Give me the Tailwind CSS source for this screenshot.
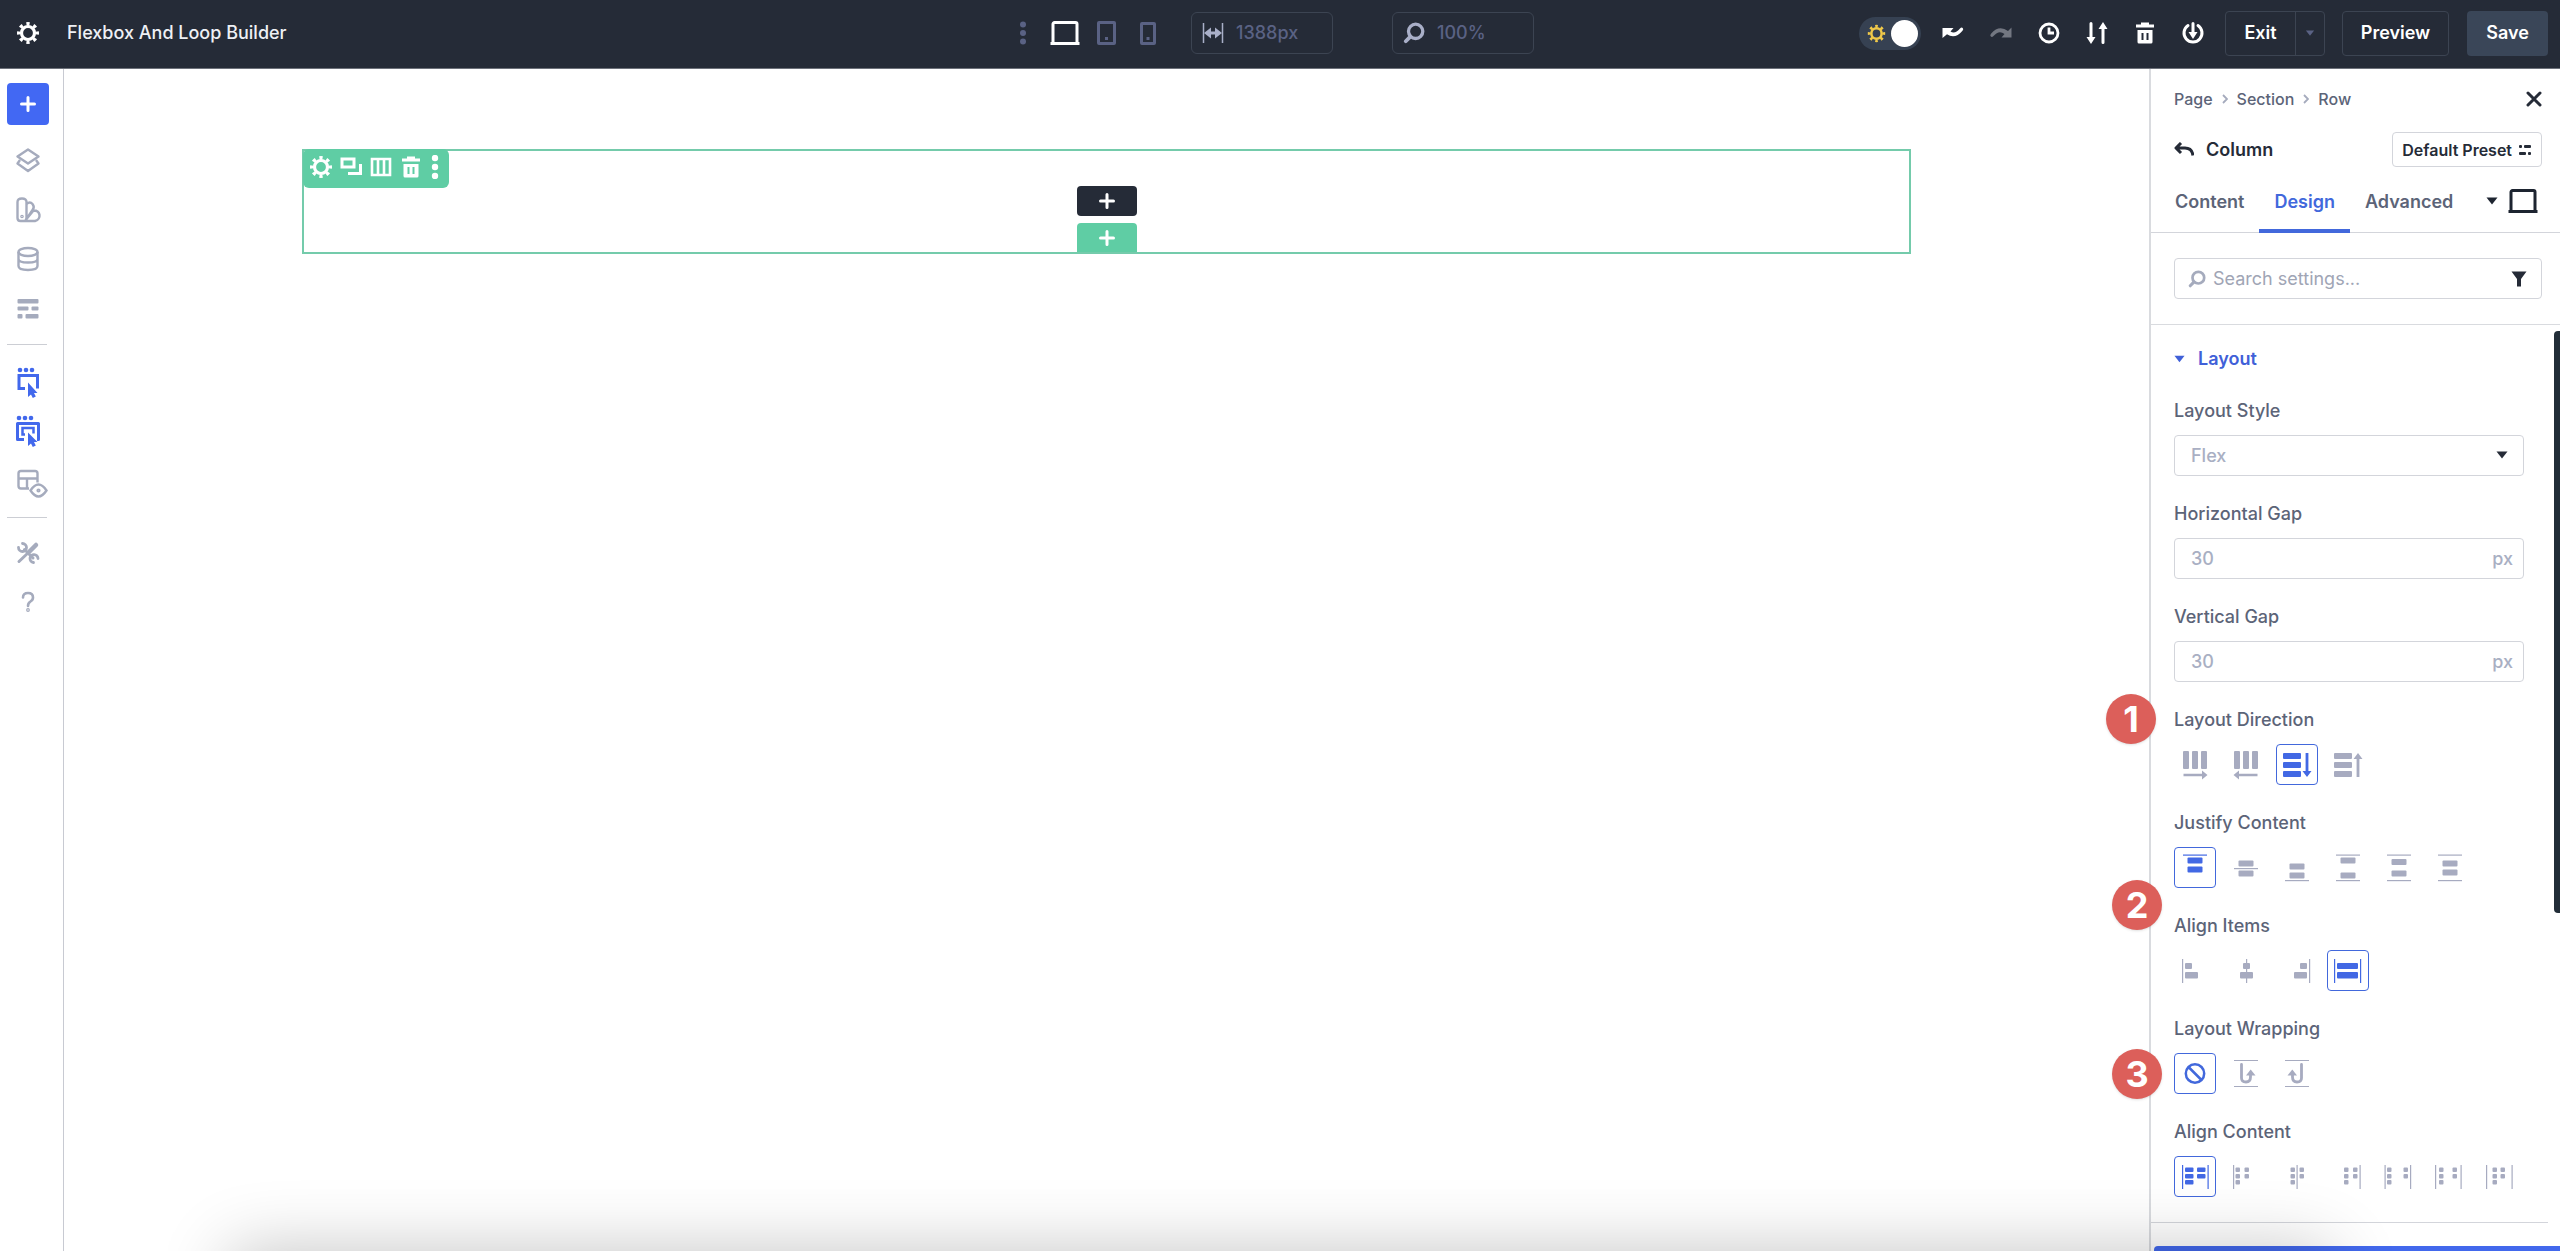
<!DOCTYPE html>
<html lang="en">
<head>
  <meta charset="UTF-8" />
  <meta name="viewport" content="width=device-width, initial-scale=1.0"/>
  <title>Flexbox And Loop Builder</title>
  <script src="https://cdn.jsdelivr.net/npm/@tailwindcss/browser@4"></script>
</head>
<body class="relative flex h-screen flex-col overflow-hidden bg-white font-['Inter',sans-serif] text-lg font-medium text-[#252b37]">

  <!-- Shared icons -->
  <svg class="hidden">
    <symbol id="gear" viewBox="0 0 24 24">
      <circle cx="12" cy="12" r="6.5" fill="none" stroke="currentColor" stroke-width="3.2"/>
      <circle cx="12" cy="12" r="9.2" fill="none" stroke="currentColor" stroke-width="3.6" pathLength="16" stroke-dasharray="0.9 1.1" stroke-dashoffset="0.45"/>
    </symbol>
    <symbol id="trash" viewBox="0 0 24 24">
      <path d="M8 1.500h8v2h5v3H3v-3h5z" fill="currentColor"/>
      <path fill-rule="evenodd" d="M4.500 9h15v12a1.500 1.500 0 0 1-1.500 1.500H6a1.500 1.500 0 0 1-1.500-1.500zM8.500 12v7h2v-7zM13.500 12v7h2v-7z" fill="currentColor"/>
    </symbol>
    <symbol id="laptop" viewBox="0 0 30 26">
      <path d="M3 22V4a1.500 1.500 0 0 1 1.500-1.500h21A1.500 1.500 0 0 1 27 4v18M0.500 23.500h29" fill="none" stroke="currentColor" stroke-width="3"/>
    </symbol>
    <symbol id="plus" viewBox="0 0 16 16">
      <path d="M8 1.500v13M1.500 8h13" stroke="currentColor" stroke-width="3" stroke-linecap="round"/>
    </symbol>
    <symbol id="search" viewBox="0 0 20 20">
      <circle cx="11.500" cy="8.500" r="6.500" fill="none" stroke="currentColor" stroke-width="3"/>
      <path d="M6.500 13.500L2.500 17.500" stroke="currentColor" stroke-width="3.500" stroke-linecap="round"/>
    </symbol>
    <symbol id="caret" viewBox="0 0 12 8">
      <path d="M0.500 0.500h11L6 7.500z" fill="currentColor"/>
    </symbol>
  </svg>

  <!-- Top Bar -->
  <header class="grid h-[69px] shrink-0 grid-cols-[1fr_auto_1fr] items-center border-b border-b-[#6d717a] bg-[#252b37] pr-3 pb-[2px] pl-4 text-white">
    <div class="flex items-center gap-[27px]">
      <button aria-label="Settings"><svg class="size-6"><use href="#gear"/></svg></button>
      <h1 class="text-[#eef0f5]">Flexbox And Loop Builder</h1>
    </div>

    <div class="flex items-center pr-[10px] text-[#5a6284]">
      <button aria-label="More views">
        <svg class="h-6 w-[6px]" viewBox="0 0 6 24" fill="currentColor"><circle cx="3" cy="3.500" r="3"/><circle cx="3" cy="12" r="3"/><circle cx="3" cy="20.500" r="3"/></svg>
      </button>
      <button class="ml-6 text-white" aria-label="Desktop view"><svg class="h-[26px] w-[30px]"><use href="#laptop"/></svg></button>
      <button class="ml-[17px]" aria-label="Tablet view">
        <svg class="h-6 w-[19px]" viewBox="0 0 19 24" fill="none" stroke="currentColor" stroke-width="3"><rect x="1.500" y="1.500" width="16" height="21" rx="0.500"/><path d="M8 17.500h3"/></svg>
      </button>
      <button class="ml-6" aria-label="Phone view">
        <svg class="h-6 w-4" viewBox="0 0 16 24" fill="none" stroke="currentColor" stroke-width="3"><rect x="1.500" y="2.500" width="13" height="20" rx="0.500"/><path d="M6.500 17.500h3"/></svg>
      </button>
      <label class="ml-[35px] flex h-[42px] w-[142px] items-center gap-3 rounded-md border border-[#3c4452] pl-[10px]">
        <svg class="h-5 w-[22px] shrink-0 text-[#a9afc8]" viewBox="0 0 22 20" stroke="currentColor" stroke-width="1.500"><path d="M1.500 0v20M20.500 0v20"/><path d="M2 10l7-5.500v4h4v-4L20 10l-7 5.500v-4H9v4z" fill="currentColor" stroke="none"/></svg>
        <input class="w-20 bg-transparent outline-none" type="text" value="1388px" aria-label="Canvas width" />
      </label>
      <label class="ml-[59px] flex h-[42px] w-[142px] items-center gap-3 rounded-md border border-[#3c4452] pl-[10px]">
        <svg class="size-[22px] shrink-0 text-[#a9afc8]"><use href="#search"/></svg>
        <input class="w-20 bg-transparent outline-none" type="text" value="100%" aria-label="Zoom" />
      </label>
    </div>

    <div class="flex items-center justify-end">
      <button class="flex h-[33px] w-[62px] items-center justify-between rounded-full bg-[#364152] pr-[3px] pl-2" role="switch" aria-checked="true" aria-label="Light mode">
        <svg class="size-[19px] text-[#f0c949]"><use href="#gear"/></svg>
        <span class="size-[27px] rounded-full bg-white"></span>
      </button>
      <div class="ml-5 flex items-center gap-6">
        <button aria-label="Undo"><svg class="size-6" viewBox="0 0 24 24"><path d="M1.500 7H12.500L9.500 10.500q4.500 3 9.500-3 1.500-1.500 2.700-0.500t-0.200 2.700q-7.500 9-15.500 3.500L1.500 17z" fill="currentColor"/></svg></button>
        <button class="text-[#737781]" aria-label="Redo"><svg class="size-6" viewBox="0 0 24 24"><path d="M22.500 6.500v10H12.500L15.500 13Q10 8.500 4.500 15q-1.500 1.500-2.700 0.500t0.200-2.700Q10 3.500 19 10z" fill="currentColor"/></svg></button>
        <button aria-label="History"><svg class="size-6" viewBox="0 0 24 24" fill="none" stroke="currentColor" stroke-width="2.800"><circle cx="12" cy="12" r="9"/><path d="M12 6.500V12h5"/></svg></button>
        <button aria-label="Portability"><svg class="size-6" viewBox="0 0 24 24"><path d="M6 2.500V18M18 6v15.500" fill="none" stroke="currentColor" stroke-width="3" stroke-linecap="round"/><path d="M1.500 16h9L6 23zM13.500 8h9L18 1z" fill="currentColor"/></svg></button>
        <button aria-label="Clear layout"><svg class="size-6"><use href="#trash"/></svg></button>
        <button aria-label="Page state"><svg class="size-6" viewBox="0 0 24 24"><path d="M7 4.500a9 9 0 1 0 10 0M12 2.500V13" fill="none" stroke="currentColor" stroke-width="3" stroke-linecap="round"/><path d="M7.500 11h9L12 18z" fill="currentColor"/></svg></button>
      </div>
      <div class="ml-5 flex h-[45px] rounded border border-[#3c4452] font-semibold">
        <button class="w-[69px]">Exit</button>
        <button class="flex w-[29px] items-center justify-center border-l border-[#3c4452] text-[#5a6284]" aria-label="Exit options"><svg class="h-[6px] w-[10px]"><use href="#caret"/></svg></button>
      </div>
      <button class="ml-[17px] h-[45px] w-[107px] rounded border border-[#3c4452] font-semibold">Preview</button>
      <button class="ml-[18px] h-[45px] w-[81px] rounded bg-[#3a4658] font-semibold">Save</button>
    </div>
  </header>

  <div class="flex min-h-0 flex-1">

    <!-- Left Toolbar -->
    <nav class="flex w-16 shrink-0 flex-col items-start border-r border-[#c8cad2] pt-[14px] pl-[7px] text-[#a5abbd]">
      <button class="flex size-[42px] items-center justify-center rounded bg-[#4268f3] text-white" aria-label="Add"><svg class="size-4"><use href="#plus"/></svg></button>
      <div class="mt-[22px] flex flex-col gap-[21px] pl-[7px]">
        <button aria-label="Layers"><svg class="block size-7" viewBox="0 0 28 28" fill="none" stroke="currentColor" stroke-width="2.400" stroke-linejoin="round"><path d="M14 2.500L24.500 9.500 14 16.500 3.500 9.500zM6 13l-2.500 3.500L14 24l10.500-7.500L22 13"/></svg></button>
        <button aria-label="Design presets"><svg class="block size-7" viewBox="0 0 28 28" fill="none" stroke="currentColor" stroke-width="2.400" stroke-linejoin="round"><path d="M3.500 6q0-3.500 4.500-3.500T12.500 6v16q0 3-3 3h-3q-3 0-3-3zM12.500 8q3.500-3 6 0t0 6l-7 10.500M19.500 14.500q5.500 0 6 4.500t-4.500 6H8.500M12.500 23l7-8.500"/><circle cx="8" cy="20.500" r="0.600"/></svg></button>
        <button aria-label="Variables"><svg class="block size-7" viewBox="0 0 28 28" fill="none" stroke="currentColor" stroke-width="2.400"><ellipse cx="14" cy="7" rx="9.500" ry="4"/><path d="M4.500 7v14q0 4 9.500 4t9.500-4V7M4.500 14q0 3.500 9.500 3.500t9.500-3.500"/></svg></button>
        <button aria-label="Wireframe"><svg class="block size-7" viewBox="0 0 28 28" fill="currentColor"><rect x="3.500" y="5" width="21" height="4.500" rx="1"/><rect x="3.500" y="12.500" width="11" height="4" rx="1"/><rect x="17.500" y="12.500" width="7" height="4" rx="1"/><rect x="3.500" y="20" width="5" height="4.500" rx="1"/><rect x="11.500" y="20" width="13" height="4.500" rx="1"/></svg></button>
      </div>
      <hr class="mt-[22px] w-10 border-[#ccced4]" />
      <div class="mt-[20px] flex flex-col gap-4 pl-[7px] text-[#4268ec]">
        <button aria-label="Click mode"><svg class="block h-[34px] w-7" viewBox="0 0 28 34"><g fill="currentColor"><circle cx="6" cy="5" r="2.300"/><circle cx="12" cy="5" r="2.300"/><circle cx="18" cy="5" r="2.300"/><path d="M14 17.500v14.500l3-2.500 1.800 3.500 3-1.500-1.800-3.500h3.500z"/></g><path d="M11 23.500H5v-13h18.500v13" fill="none" stroke="currentColor" stroke-width="3"/></svg></button>
        <button aria-label="Grid mode"><svg class="block h-[34px] w-7" viewBox="0 0 28 34"><g fill="currentColor"><circle cx="5" cy="3" r="2.300"/><circle cx="11" cy="3" r="2.300"/><circle cx="17" cy="3" r="2.300"/><path d="M14 17.500v13.500l3-2.500 1.800 3.500 3-1.500-1.800-3.500h3.500z"/></g><path d="M10 24.500H3.500v-16h21v16H23" fill="none" stroke="currentColor" stroke-width="3" stroke-linejoin="round"/><path d="M11 19.500H8.500v-6.500h11v5.500" fill="none" stroke="currentColor" stroke-width="2.500"/></svg></button>
        <button class="mt-[3px] text-[#a5abbd]" aria-label="Preview layout"><svg class="block h-[34px] w-9" viewBox="0 0 36 34" fill="none" stroke="currentColor" stroke-width="2.400"><path d="M15 20.500H7q-2.500 0-2.500-2.500V5.500Q4.500 3 7 3h14q2.500 0 2.500 2.500v9M4.500 10.500h19M13 10.500v10"/><path d="M16.500 22.500q8-12 16 0-8 12-16 0z" fill="#fff"/><circle cx="24.500" cy="22.500" r="0.900"/></svg></button>
      </div>
      <hr class="mt-[15px] w-10 border-[#ccced4]" />
      <div class="mt-[21px] flex flex-col gap-[21px] pl-[7px]">
        <button aria-label="Tools"><svg class="block size-7" viewBox="0 0 28 28" fill="none" stroke="currentColor" stroke-linecap="round"><path d="M10.500 10.500L19 19M5 22.500L15 13" stroke-width="3"/><path d="M15.500 12.500L22 6" stroke-width="4.500"/><path d="M8.500 4.500a4 4 0 1 1-4 4M24 19.500a4 4 0 1 0-4.500 4" stroke-width="2.800"/></svg></button>
        <button aria-label="Help"><svg class="block size-7" viewBox="0 0 28 28" fill="none" stroke="currentColor" stroke-width="2.600"><path d="M9 9.500Q9 5 14 5t5 4.500q0 2.500-2.500 4T14 18" stroke-linecap="round"/><circle cx="14" cy="22" r="0.600"/></svg></button>
      </div>
    </nav>

    <!-- Canvas -->
    <main class="min-w-0 flex-1 px-[238px] pt-20">
      <section class="flex h-[105px] items-start border-2 border-[#74cbab]">
        <div class="-mt-[2px] -ml-px flex h-[39px] w-[146px] items-center gap-[6px] rounded-md bg-[#5fcda4] pb-[3px] pl-[6px] text-white">
          <button aria-label="Row settings"><svg class="size-6"><use href="#gear"/></svg></button>
          <button aria-label="Duplicate"><svg class="size-6" viewBox="0 0 24 24" fill="none" stroke="currentColor" stroke-width="3"><path d="M3 4h12v8H3zM9 18.500h12.500V9"/></svg></button>
          <button aria-label="Columns"><svg class="size-6" viewBox="0 0 24 24" fill="none" stroke="currentColor" stroke-width="2.600"><path d="M3 4h18v16H3zM9 4v16M15 4v16"/></svg></button>
          <button aria-label="Delete"><svg class="size-6"><use href="#trash"/></svg></button>
          <button aria-label="More options"><svg class="h-6 w-[12px]" viewBox="0 0 12 24" fill="currentColor"><circle cx="6" cy="3" r="3.200"/><circle cx="6" cy="12" r="3.200"/><circle cx="6" cy="21" r="3.200"/></svg></button>
        </div>
        <div class="-ml-[145px] flex flex-1 flex-col items-center gap-[7px] self-end">
          <button class="flex h-[30px] w-[60px] items-center justify-center rounded bg-[#252b37] text-white" aria-label="Add module"><svg class="size-4"><use href="#plus"/></svg></button>
          <button class="flex h-[29px] w-[60px] items-center justify-center rounded-t bg-[#5fcda4] text-white" aria-label="Add row"><svg class="size-4"><use href="#plus"/></svg></button>
        </div>
      </section>
    </main>

    <!-- Settings Panel -->
    <aside class="relative flex w-[411px] shrink-0 flex-col border-l-2 border-[#d9dbdf] text-[#5c6478]">
      <div class="flex flex-col pt-[18px] pr-[18px] pl-[23px]">
        <div class="flex h-6 items-center justify-between">
          <nav class="flex items-center gap-[9px] text-base" aria-label="Breadcrumb">
            <a href="#">Page</a>
            <svg class="h-[10px] w-[6px]" viewBox="0 0 6 10" fill="none" stroke="#a5abbd" stroke-width="1.800"><path d="M1 1l4 4-4 4"/></svg>
            <a href="#">Section</a>
            <svg class="h-[10px] w-[6px]" viewBox="0 0 6 10" fill="none" stroke="#a5abbd" stroke-width="1.800"><path d="M1 1l4 4-4 4"/></svg>
            <a href="#">Row</a>
          </nav>
          <button class="text-[#252b37]" aria-label="Close"><svg class="size-4" viewBox="0 0 16 16" stroke="currentColor" stroke-width="3" stroke-linecap="round"><path d="M2 2l12 12M14 2L2 14"/></svg></button>
        </div>
        <div class="mt-[21px] flex h-[35px] items-center justify-between font-semibold text-[#252b37]">
          <div class="flex items-center gap-3">
            <button aria-label="Back"><svg class="h-4 w-5" viewBox="0 0 20 16" fill="none" stroke="currentColor" stroke-width="3"><path d="M7 1L2 6l5 5M2.500 6H11q7 0 8 7.500" stroke-linejoin="round"/></svg></button>
            <h2>Column</h2>
          </div>
          <button class="flex h-[35px] items-center gap-[6px] rounded border border-[#d3d5db] px-[9px] text-base">
            Default Preset
            <svg class="h-3 w-[14px]" viewBox="0 0 14 12" fill="currentColor"><rect x="1" y="1" width="3" height="3" rx="1"/><rect x="6" y="1" width="7" height="3" rx="1"/><rect x="1" y="8" width="7" height="3" rx="1"/><rect x="10" y="8" width="3" height="3" rx="1"/></svg>
          </button>
        </div>
      </div>

      <div class="mt-[3px] flex h-[63px] items-stretch border-b border-[#d3d5db] pr-[22px] pl-[9px] font-semibold">
        <button class="-mb-px border-y-4 border-transparent px-[15px]">Content</button>
        <button class="-mb-px border-y-4 border-t-transparent border-b-[#4268dc] px-[15px] text-[#4268dc]">Design</button>
        <button class="-mb-px border-y-4 border-transparent px-[15px]">Advanced</button>
        <button class="ml-auto flex items-center gap-[10px] text-[#1d2430]" aria-label="Responsive view">
          <svg class="h-[8px] w-[12px]"><use href="#caret"/></svg>
          <svg class="h-[26px] w-[30px]"><use href="#laptop"/></svg>
        </button>
      </div>

      <div class="border-b border-[#d9dbdf] py-[25px] pr-[18px] pl-[23px]">
        <label class="flex h-[41px] items-center gap-[7px] rounded border border-[#d3d5db] pr-[14px] pl-[13px]">
          <svg class="size-[18px] shrink-0 text-[#a5abbd]"><use href="#search"/></svg>
          <input class="min-w-0 flex-1 bg-transparent font-normal outline-none placeholder:text-[#a0a5b5]" type="text" placeholder="Search settings..." aria-label="Search settings" />
          <svg class="h-4 w-4" viewBox="0 0 16 16"><path d="M0.500 0.500h15L10 8v7.500H6V8z" fill="#252b37"/></svg>
        </label>
      </div>

      <div class="mr-[12px] flex flex-col gap-[26px] border-b border-[#d3d5db] pt-[22px] pr-[24px] pb-[25px] pl-[23px]">
        <button class="mb-[2px] flex h-6 items-center gap-[13px] font-semibold text-[#4060d8]" aria-expanded="true">
          <svg class="h-[8px] w-[11px]"><use href="#caret"/></svg>
          Layout
        </button>

        <div>
          <label class="mb-3 block h-6 leading-6" for="layoutStyle">Layout Style</label>
          <div class="relative">
            <select id="layoutStyle" class="block h-[41px] w-full appearance-none rounded border border-[#d3d5db] bg-white px-4 text-[#a9afc3] outline-none">
              <option>Flex</option>
              <option>Grid</option>
              <option>Block</option>
            </select>
            <svg class="pointer-events-none absolute top-4 right-4 h-[8px] w-[12px] text-[#252b37]"><use href="#caret"/></svg>
          </div>
        </div>

        <div>
          <label class="mb-3 block h-6 leading-6" for="horizontalGap">Horizontal Gap</label>
          <div class="flex h-[41px] items-center rounded border border-[#d3d5db] pr-[10px] pl-4 text-[#a9afc3]">
            <input id="horizontalGap" class="min-w-0 flex-1 outline-none" type="text" value="30" />
            <span>px</span>
          </div>
        </div>

        <div>
          <label class="mb-3 block h-6 leading-6" for="verticalGap">Vertical Gap</label>
          <div class="flex h-[41px] items-center rounded border border-[#d3d5db] pr-[10px] pl-4 text-[#a9afc3]">
            <input id="verticalGap" class="min-w-0 flex-1 outline-none" type="text" value="30" />
            <span>px</span>
          </div>
        </div>

        <div role="group" aria-labelledby="directionLabel">
          <p id="directionLabel" class="mb-3 h-6 leading-6">Layout Direction</p>
          <div class="flex gap-[9px] text-[#a7abc0]">
            <button class="h-[41px] w-[42px] rounded border border-transparent" aria-label="Row"><svg class="h-[39px] w-10" viewBox="1 1 40 39" fill="currentColor"><rect x="9" y="7" width="6" height="18" rx="1"/><rect x="18" y="7" width="6" height="18" rx="1"/><rect x="27" y="7" width="6" height="18" rx="1"/><path d="M9.500 29.800H28V26.500L33.500 31 28 35.500V32.200H9.500z"/></svg></button>
            <button class="h-[41px] w-[42px] rounded border border-transparent" aria-label="Row reverse"><svg class="h-[39px] w-10" viewBox="1 1 40 39" fill="currentColor"><rect x="9" y="7" width="6" height="18" rx="1"/><rect x="18" y="7" width="6" height="18" rx="1"/><rect x="27" y="7" width="6" height="18" rx="1"/><path d="M32.500 29.800H14V26.500L8.500 31 14 35.500V32.200H32.500z"/></svg></button>
            <button class="h-[41px] w-[42px] rounded border border-[#4268dc] text-[#4268e4]" aria-label="Column" aria-pressed="true"><svg class="h-[39px] w-10" viewBox="1 1 40 39" fill="currentColor"><rect x="7" y="9" width="18" height="6" rx="1"/><rect x="7" y="18" width="18" height="6" rx="1"/><rect x="7" y="27" width="18" height="6" rx="1"/><path d="M29.600 9h2.800v18H35.500L31 33 26.500 27H29.600z"/></svg></button>
            <button class="h-[41px] w-[42px] rounded border border-transparent" aria-label="Column reverse"><svg class="h-[39px] w-10" viewBox="1 1 40 39" fill="currentColor"><rect x="7" y="9" width="18" height="6" rx="1"/><rect x="7" y="18" width="18" height="6" rx="1"/><rect x="7" y="27" width="18" height="6" rx="1"/><path d="M29.600 33h2.800V15H35.500L31 9 26.500 15H29.600z"/></svg></button>
          </div>
        </div>

        <div role="group" aria-labelledby="justifyLabel">
          <p id="justifyLabel" class="mb-3 h-6 leading-6">Justify Content</p>
          <div class="flex gap-[9px] text-[#a7abc0]">
            <button class="h-[41px] w-[42px] rounded border border-[#4268dc] text-[#4268e4]" aria-label="Start" aria-pressed="true"><svg class="h-[39px] w-10" viewBox="1 1 40 39" fill="currentColor"><rect x="9" y="7.500" width="24" height="1.200"/><rect x="13.500" y="10.500" width="15" height="6" rx="1"/><rect x="13.500" y="19.500" width="15" height="6" rx="1"/></svg></button>
            <button class="h-[41px] w-[42px] rounded border border-transparent" aria-label="Center"><svg class="h-[39px] w-10" viewBox="1 1 40 39" fill="currentColor"><rect x="9" y="21" width="24" height="1.200"/><rect x="13.500" y="13.500" width="15" height="6" rx="1"/><rect x="13.500" y="23.500" width="15" height="6" rx="1"/></svg></button>
            <button class="h-[41px] w-[42px] rounded border border-transparent" aria-label="End"><svg class="h-[39px] w-10" viewBox="1 1 40 39" fill="currentColor"><rect x="9" y="33" width="24" height="1.200"/><rect x="13.500" y="16.500" width="15" height="6" rx="1"/><rect x="13.500" y="25.500" width="15" height="6" rx="1"/></svg></button>
            <button class="h-[41px] w-[42px] rounded border border-transparent" aria-label="Space between"><svg class="h-[39px] w-10" viewBox="1 1 40 39" fill="currentColor"><rect x="9" y="7.500" width="24" height="1.200"/><rect x="9" y="33" width="24" height="1.200"/><rect x="13.500" y="10.500" width="15" height="6" rx="1"/><rect x="13.500" y="25.500" width="15" height="6" rx="1"/></svg></button>
            <button class="h-[41px] w-[42px] rounded border border-transparent" aria-label="Space around"><svg class="h-[39px] w-10" viewBox="1 1 40 39" fill="currentColor"><rect x="9" y="7.500" width="24" height="1.200"/><rect x="9" y="33" width="24" height="1.200"/><rect x="13.500" y="12" width="15" height="6" rx="1"/><rect x="13.500" y="23.500" width="15" height="6" rx="1"/></svg></button>
            <button class="h-[41px] w-[42px] rounded border border-transparent" aria-label="Space evenly"><svg class="h-[39px] w-10" viewBox="1 1 40 39" fill="currentColor"><rect x="9" y="7.500" width="24" height="1.200"/><rect x="9" y="33" width="24" height="1.200"/><rect x="13.500" y="13.500" width="15" height="6" rx="1"/><rect x="13.500" y="22.500" width="15" height="6" rx="1"/></svg></button>
          </div>
        </div>

        <div role="group" aria-labelledby="alignItemsLabel">
          <p id="alignItemsLabel" class="mb-3 h-6 leading-6">Align Items</p>
          <div class="flex gap-[9px] text-[#a7abc0]">
            <button class="h-[41px] w-[42px] rounded border border-transparent" aria-label="Start"><svg class="h-[39px] w-10" viewBox="1 1 40 39" fill="currentColor"><rect x="8" y="9" width="1.200" height="24"/><rect x="11" y="13" width="7" height="6" rx="1"/><rect x="11" y="22" width="13" height="6.500" rx="1"/></svg></button>
            <button class="h-[41px] w-[42px] rounded border border-transparent" aria-label="Center"><svg class="h-[39px] w-10" viewBox="1 1 40 39" fill="currentColor"><rect x="21" y="9" width="1.200" height="24"/><rect x="18" y="13" width="7" height="6" rx="1"/><rect x="15" y="22" width="13" height="6.500" rx="1"/></svg></button>
            <button class="h-[41px] w-[42px] rounded border border-transparent" aria-label="End"><svg class="h-[39px] w-10" viewBox="1 1 40 39" fill="currentColor"><rect x="33" y="9" width="1.200" height="24"/><rect x="24" y="13" width="7" height="6" rx="1"/><rect x="18" y="22" width="13" height="6.500" rx="1"/></svg></button>
            <button class="h-[41px] w-[42px] rounded border border-[#4268dc] text-[#4268e4]" aria-label="Stretch" aria-pressed="true"><svg class="h-[39px] w-10" viewBox="1 1 40 39" fill="currentColor"><rect x="7" y="9" width="1.200" height="24"/><rect x="33" y="9" width="1.200" height="24"/><rect x="10" y="13" width="21" height="6" rx="1"/><rect x="10" y="22" width="21" height="6.500" rx="1"/></svg></button>
          </div>
        </div>

        <div role="group" aria-labelledby="wrapLabel">
          <p id="wrapLabel" class="mb-3 h-6 leading-6">Layout Wrapping</p>
          <div class="flex gap-[9px] text-[#a7abc0]">
            <button class="h-[41px] w-[42px] rounded border border-[#4268dc] text-[#4268dc]" aria-label="No wrap" aria-pressed="true"><svg class="h-[39px] w-10" viewBox="1 1 40 39" fill="none" stroke="currentColor" stroke-width="2.500"><circle cx="21" cy="20.500" r="9.200"/><path d="M14.500 14l13 13"/></svg></button>
            <button class="h-[41px] w-[42px] rounded border border-transparent" aria-label="Wrap"><svg class="h-[39px] w-10" viewBox="1 1 40 39" fill="none" stroke="currentColor"><path d="M9 7.500h24M9 33.500h24" stroke-width="1.200"/><path d="M16.500 11.500V25q0 4 4.500 4t4.500-5v-3" stroke-width="2.800" stroke-linecap="round"/><path d="M21 22.500h9.500L25.700 16.500z" fill="currentColor" stroke="none"/></svg></button>
            <button class="h-[41px] w-[42px] rounded border border-transparent" aria-label="Wrap reverse"><svg class="h-[39px] w-10" viewBox="1 1 40 39" fill="none" stroke="currentColor"><path d="M9 7.500h24M9 33.500h24" stroke-width="1.200"/><path d="M25.500 11.500V25q0 4-4.500 4t-4.500-5v-3" stroke-width="2.800" stroke-linecap="round"/><path d="M21 22.500h-9.500L16.300 16.500z" fill="currentColor" stroke="none"/></svg></button>
          </div>
        </div>

        <div role="group" aria-labelledby="alignContentLabel">
          <p id="alignContentLabel" class="mb-3 h-6 leading-6">Align Content</p>
          <div class="flex gap-[9px] text-[#a7abc0]">
            <button class="h-[41px] w-[42px] shrink-0 rounded border border-[#4268dc] text-[#4268e4]" aria-label="Stretch" aria-pressed="true"><svg class="h-[39px] w-10" viewBox="1 1 40 39" fill="currentColor"><rect x="8" y="9" width="1.200" height="24"/><rect x="33.500" y="9" width="1.200" height="24"/><rect x="11" y="11.500" width="8.500" height="4.500" rx="1"/><rect x="11" y="18" width="8.500" height="4.500" rx="1"/><rect x="11" y="24" width="8.500" height="4.500" rx="1"/><rect x="23" y="11.500" width="8.500" height="4.500" rx="1"/><rect x="23" y="18" width="8.500" height="4.500" rx="1"/></svg></button>
            <button class="h-[41px] w-[42px] shrink-0 rounded border border-transparent" aria-label="Start"><svg class="h-[39px] w-10" viewBox="1 1 40 39" fill="currentColor"><rect x="8" y="9" width="1.200" height="24"/><rect x="10.500" y="11.500" width="4.500" height="4.500" rx="1"/><rect x="10.500" y="18" width="4.500" height="4.500" rx="1"/><rect x="10.500" y="24" width="4.500" height="4.500" rx="1"/><rect x="19.500" y="11.500" width="4.500" height="4.500" rx="1"/><rect x="19.500" y="18" width="4.500" height="4.500" rx="1"/></svg></button>
            <button class="h-[41px] w-[42px] shrink-0 rounded border border-transparent" aria-label="Center"><svg class="h-[39px] w-10" viewBox="1 1 40 39" fill="currentColor"><rect x="20.500" y="9" width="1.200" height="24"/><rect x="14.500" y="11.500" width="4.500" height="4.500" rx="1"/><rect x="14.500" y="18" width="4.500" height="4.500" rx="1"/><rect x="14.500" y="24" width="4.500" height="4.500" rx="1"/><rect x="23.500" y="11.500" width="4.500" height="4.500" rx="1"/><rect x="23.500" y="18" width="4.500" height="4.500" rx="1"/></svg></button>
            <button class="h-[41px] w-[42px] shrink-0 rounded border border-transparent" aria-label="End"><svg class="h-[39px] w-10" viewBox="1 1 40 39" fill="currentColor"><rect x="32.500" y="9" width="1.200" height="24"/><rect x="17" y="11.500" width="4.500" height="4.500" rx="1"/><rect x="17" y="18" width="4.500" height="4.500" rx="1"/><rect x="17" y="24" width="4.500" height="4.500" rx="1"/><rect x="26" y="11.500" width="4.500" height="4.500" rx="1"/><rect x="26" y="18" width="4.500" height="4.500" rx="1"/></svg></button>
            <button class="h-[41px] w-[42px] shrink-0 rounded border border-transparent" aria-label="Space between"><svg class="h-[39px] w-10" viewBox="1 1 40 39" fill="currentColor"><rect x="6.500" y="9" width="1.200" height="24"/><rect x="32" y="9" width="1.200" height="24"/><rect x="9" y="11.500" width="4.500" height="4.500" rx="1"/><rect x="9" y="18" width="4.500" height="4.500" rx="1"/><rect x="9" y="24" width="4.500" height="4.500" rx="1"/><rect x="25.500" y="11.500" width="4.500" height="4.500" rx="1"/><rect x="25.500" y="18" width="4.500" height="4.500" rx="1"/></svg></button>
            <button class="h-[41px] w-[42px] shrink-0 rounded border border-transparent" aria-label="Space around"><svg class="h-[39px] w-10" viewBox="1 1 40 39" fill="currentColor"><rect x="6" y="9" width="1.200" height="24"/><rect x="31.500" y="9" width="1.200" height="24"/><rect x="10" y="11.500" width="4.500" height="4.500" rx="1"/><rect x="10" y="18" width="4.500" height="4.500" rx="1"/><rect x="10" y="24" width="4.500" height="4.500" rx="1"/><rect x="23.500" y="11.500" width="4.500" height="4.500" rx="1"/><rect x="23.500" y="18" width="4.500" height="4.500" rx="1"/></svg></button>
            <button class="h-[41px] w-[42px] shrink-0 rounded border border-transparent" aria-label="Space evenly"><svg class="h-[39px] w-10" viewBox="1 1 40 39" fill="currentColor"><rect x="6" y="9" width="1.200" height="24"/><rect x="31.500" y="9" width="1.200" height="24"/><rect x="12.500" y="11.500" width="4.500" height="4.500" rx="1"/><rect x="12.500" y="18" width="4.500" height="4.500" rx="1"/><rect x="12.500" y="24" width="4.500" height="4.500" rx="1"/><rect x="20.500" y="11.500" width="4.500" height="4.500" rx="1"/><rect x="20.500" y="18" width="4.500" height="4.500" rx="1"/></svg></button>
          </div>
        </div>
      </div>

      <!-- Footer strip, scrollbar thumb and step markers lie over the panel -->
      <div class="absolute right-0 bottom-0 left-[3px] h-[5px] rounded-tl bg-[#4268ec]"></div>
      <div class="absolute top-[262px] right-0 h-[582px] w-[6px] rounded-l bg-[#222d38]"></div>
      <div class="absolute top-[625px] -left-[45px] flex size-[50px] items-center justify-center rounded-full bg-[#dc5f5a] text-4xl font-bold text-white shadow-sm">1</div>
      <div class="absolute top-[811px] -left-[39px] flex size-[50px] items-center justify-center rounded-full bg-[#dc5f5a] text-4xl font-bold text-white shadow-sm">2</div>
      <div class="absolute top-[980px] -left-[39px] flex size-[50px] items-center justify-center rounded-full bg-[#dc5f5a] text-4xl font-bold text-white shadow-sm">3</div>
    </aside>
  </div>

  <!-- Soft shadow rising from the bottom edge -->
  <div class="pointer-events-none absolute inset-0 overflow-hidden">
    <div class="absolute top-full right-[230px] left-[230px] h-40 shadow-[0_0_70px_rgba(0,0,0,0.24)]"></div>
  </div>
</body>
</html>
